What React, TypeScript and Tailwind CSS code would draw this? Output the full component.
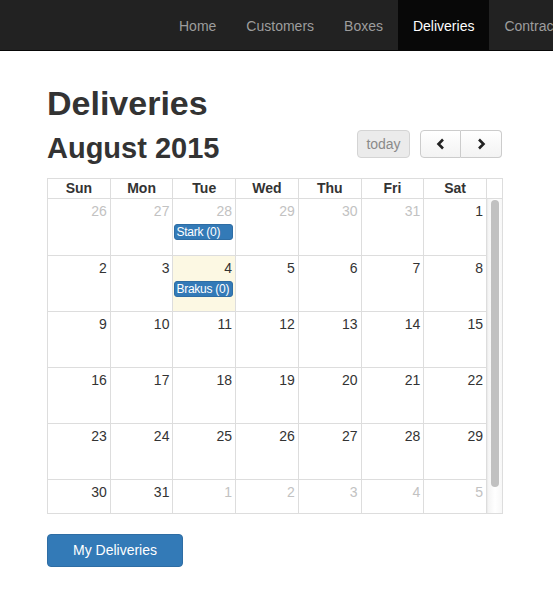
import React from 'react';

// Calendar page for deliveries: dark top nav, month view, action button.

type Day = { n: number; other?: boolean; today?: boolean; events?: string[] };

const navItems = ['Home', 'Customers', 'Boxes', 'Deliveries', 'Contracts', 'Reports'];

const weekdays = ['Sun', 'Mon', 'Tue', 'Wed', 'Thu', 'Fri', 'Sat'];

const weeks: Day[][] = [
  [
    { n: 26, other: true },
    { n: 27, other: true },
    { n: 28, other: true, events: ['Stark (0)'] },
    { n: 29, other: true },
    { n: 30, other: true },
    { n: 31, other: true },
    { n: 1 },
  ],
  [{ n: 2 }, { n: 3 }, { n: 4, today: true, events: ['Brakus (0)'] }, { n: 5 }, { n: 6 }, { n: 7 }, { n: 8 }],
  [{ n: 9 }, { n: 10 }, { n: 11 }, { n: 12 }, { n: 13 }, { n: 14 }, { n: 15 }],
  [{ n: 16 }, { n: 17 }, { n: 18 }, { n: 19 }, { n: 20 }, { n: 21 }, { n: 22 }],
  [{ n: 23 }, { n: 24 }, { n: 25 }, { n: 26 }, { n: 27 }, { n: 28 }, { n: 29 }],
  [
    { n: 30 },
    { n: 31 },
    { n: 1, other: true },
    { n: 2, other: true },
    { n: 3, other: true },
    { n: 4, other: true },
    { n: 5, other: true },
  ],
];

const Chevron = ({ dir }: { dir: 'left' | 'right' }) => (
  <svg width="10" height="12" viewBox="0 0 10 12" className="block">
    <polyline
      points={dir === 'left' ? '7,1.5 2.5,6 7,10.5' : '3,1.5 7.5,6 3,10.5'}
      fill="none"
      stroke="#222"
      strokeWidth="2.6"
      strokeLinejoin="miter"
    />
  </svg>
);

const Navbar = () => (
  <div className="h-[51px] bg-[#222] border-b border-[#080808] overflow-hidden">
    <ul className="flex ml-[164px] whitespace-nowrap">
      {navItems.map((item) => (
        <li
          key={item}
          className={`px-[15px] pt-[16px] pb-[14px] text-[14px] leading-5 ${
            item === 'Deliveries' ? 'bg-[#080808] text-white' : 'text-[#9d9d9d]'
          }`}
        >
          {item}
        </li>
      ))}
    </ul>
  </div>
);

const DayCell = ({ day }: { day: Day }) => (
  <div className={`border-r border-[#ddd] ${day.today ? 'bg-[#fcf8e3]' : 'bg-white'}`}>
    <div
      className={`text-right pr-[3px] pt-[2px] text-[14px] leading-5 ${
        day.other ? 'text-[#c2c2c2]' : 'text-[#333]'
      }`}
    >
      {day.n}
    </div>
    {day.events?.map((ev) => (
      <div
        key={ev}
        className="mt-[3px] ml-[1px] mr-[2px] h-4 px-[1px] rounded-[3px] border border-[#2e6da4] bg-[#337ab7] text-white text-[12px] leading-[14px] tracking-[-0.25px] whitespace-nowrap overflow-hidden"
      >
        {ev}
      </div>
    ))}
  </div>
);

const Calendar = () => (
  <div className="w-[456px] border border-[#ddd] mt-[14px]">
    {/* Weekday header */}
    <div className="flex h-5 border-b border-[#ddd]">
      <div className="grid grid-cols-7 w-[439px]">
        {weekdays.map((d) => (
          <div key={d} className="border-r border-[#ddd] text-center font-bold text-[14px] leading-[19px] text-[#333]">
            {d}
          </div>
        ))}
      </div>
      <div className="w-[15px]" />
    </div>

    {/* Scrolling body */}
    <div className="flex h-[314px]">
      <div className="w-[439px] h-full overflow-hidden">
        {weeks.map((week, i) => (
          <div
            key={i}
            className={`grid grid-cols-7 border-b border-[#ddd] ${i === 0 ? 'h-[57px]' : 'h-[56px]'}`}
          >
            {week.map((day, j) => (
              <DayCell key={j} day={day} />
            ))}
          </div>
        ))}
      </div>
      {/* Fake scrollbar */}
      <div className="w-[15px] h-full border-l border-[#ececec] bg-gradient-to-r from-[#f4f4f4] via-white to-[#f7f7f7] pt-[1px] pl-[3px]">
        <div className="w-[8px] h-[287px] rounded-full bg-[#c1c1c1]" />
      </div>
    </div>
  </div>
);

export default function App() {
  return (
    <div className="min-h-screen bg-white text-[#333]" style={{ fontFamily: '"Liberation Sans", Arial, sans-serif' }}>
      <Navbar />

      <div className="px-[47px]">
        <h1 className="mt-[34px] text-[34px] leading-[37px] font-bold text-[#333]">Deliveries</h1>

        <div className="flex items-start justify-between w-[455px] mt-[8px]">
          <h2 className="mt-[2px] text-[29px] leading-[32px] font-bold text-[#333]">August 2015</h2>
          <div className="flex gap-[10px]">
            <button className="w-[53px] h-[28px] rounded-[4px] border border-[#d4d4d4] bg-[#ebebeb] text-[14px] text-[#8a8a8a]">
              today
            </button>
            <div className="flex">
              <button className="w-[41px] h-[28px] flex items-center justify-center rounded-l-[4px] border border-[#ccc] bg-gradient-to-b from-white to-[#f3f3f3]">
                <Chevron dir="left" />
              </button>
              <button className="w-[41px] h-[28px] flex items-center justify-center rounded-r-[4px] border border-l-0 border-[#ccc] bg-gradient-to-b from-white to-[#f3f3f3]">
                <Chevron dir="right" />
              </button>
            </div>
          </div>
        </div>

        <Calendar />

        <button className="mt-[20px] w-[136px] h-[33px] rounded-[4px] border border-[#2e6da4] bg-[#337ab7] text-white text-[14px]">
          My Deliveries
        </button>
      </div>
    </div>
  );
}
